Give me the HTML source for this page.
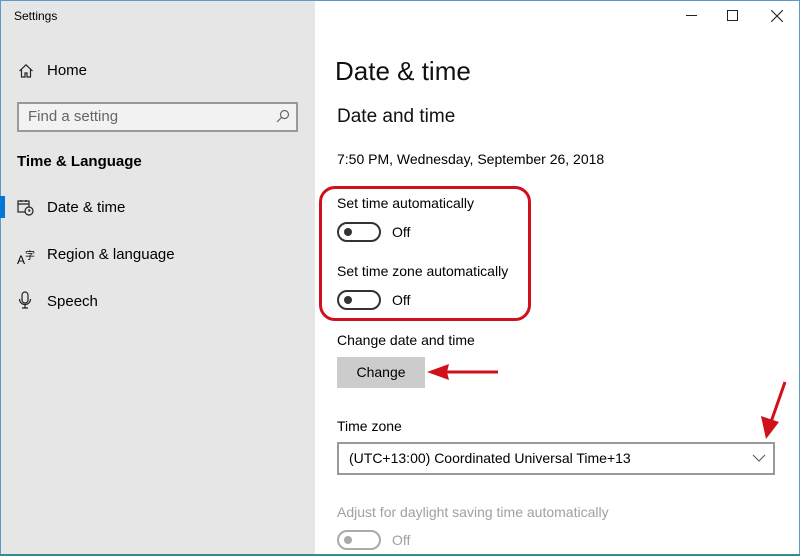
<!DOCTYPE html>
<html><head><style>
*{margin:0;padding:0;box-sizing:border-box}
body{width:800px;height:556px;overflow:hidden;background:#fff;font-family:"Liberation Sans",sans-serif;position:relative;color:#000}
.a{position:absolute;white-space:nowrap}
.side{position:absolute;left:0;top:0;width:315px;height:556px;background:#e6e6e6;border-left:1px solid #5a9bc8}
.tog{position:absolute;width:44px;height:20px;border:2px solid #333;border-radius:10px}
.tog::after{content:"";position:absolute;left:5px;top:4px;width:8px;height:8px;border-radius:50%;background:#333}
</style></head><body>
<div class="side"></div>
<div class="a" style="left:0;top:0;width:800px;height:1px;background:#5a9bc8"></div>
<div class="a" style="right:0;top:0;width:1px;height:556px;background:#5a9bc8"></div>
<div class="a" style="left:0;bottom:0;width:800px;height:2px;background:#3a8a8a"></div>
<div class="a" style="left:14px;top:9px;font-size:12px">Settings</div>
<svg class="a" style="left:18px;top:63px" width="16" height="16" viewBox="0 0 16 16" fill="none" stroke="#222" stroke-width="1.2"><path d="M1.5 8 8 1.8 14.5 8M3.5 6.5V14h3.5V10h2v4h3.5V6.5"/></svg>
<div class="a" style="left:47px;top:62px;font-size:15px">Home</div>
<div class="a" style="left:17px;top:102px;width:281px;height:30px;border:2px solid #999;background:#f2f2f2"></div>
<div class="a" style="left:28px;top:108px;font-size:15px;color:#666">Find a setting</div>
<svg class="a" style="left:276px;top:109px" width="14" height="14" viewBox="0 0 14 14" fill="none" stroke="#666" stroke-width="1.2"><circle cx="8.5" cy="5.5" r="4"/><path d="M5.5 8.5 1 13"/></svg>
<div class="a" style="left:17px;top:153px;font-size:15px;font-weight:bold">Time &amp; Language</div>
<div class="a" style="left:0;top:196px;width:5px;height:22px;background:#0078d7"></div>
<svg class="a" style="left:17px;top:199px" width="17" height="17" viewBox="0 0 17 17" fill="none" stroke="#222" stroke-width="1.2"><rect x="1" y="2" width="11" height="11"/><path d="M1 5h11M4 1v2M9 1v2"/><circle cx="12" cy="12" r="4" fill="#e6e6e6"/><path d="M12 10v2h1.5"/></svg>
<div class="a" style="left:47px;top:199px;font-size:15px">Date &amp; time</div>
<div class="a" style="left:17px;top:247px;font-size:12px">A<sup style="font-size:10px">字</sup></div>
<div class="a" style="left:47px;top:246px;font-size:15px">Region &amp; language</div>
<svg class="a" style="left:18px;top:291px" width="14" height="18" viewBox="0 0 14 18" fill="none" stroke="#222" stroke-width="1.2"><rect x="4" y="1" width="6" height="11" rx="3"/><path d="M1.5 8a5.5 5.5 0 0 0 11 0M7 13.5V17M4 17h6"/></svg>
<div class="a" style="left:47px;top:293px;font-size:15px">Speech</div>
<div class="a" style="left:686px;top:15px;width:11px;height:1px;background:#222"></div>
<div class="a" style="left:727px;top:10px;width:11px;height:11px;border:1px solid #222"></div>
<svg class="a" style="left:771px;top:10px" width="12" height="12" viewBox="0 0 12 12" stroke="#222" stroke-width="1.1"><path d="M0 0 12 12M12 0 0 12"/></svg>
<div class="a" style="left:335px;top:56px;font-size:26px;color:#111">Date &amp; time</div>
<div class="a" style="left:337px;top:106px;font-size:19px;color:#111">Date and time</div>
<div class="a" style="left:337px;top:151px;font-size:14px">7:50 PM, Wednesday, September 26, 2018</div>
<div class="a" style="left:319px;top:186px;width:212px;height:135px;border:3px solid #d0101a;border-radius:16px"></div>
<div class="a" style="left:337px;top:195px;font-size:14px">Set time automatically</div>
<div class="tog" style="left:337px;top:222px"></div>
<div class="a" style="left:392px;top:224px;font-size:14px">Off</div>
<div class="a" style="left:337px;top:263px;font-size:14px">Set time zone automatically</div>
<div class="tog" style="left:337px;top:290px"></div>
<div class="a" style="left:392px;top:292px;font-size:14px">Off</div>
<div class="a" style="left:337px;top:332px;font-size:14px">Change date and time</div>
<div class="a" style="left:337px;top:357px;width:88px;height:31px;background:#cccccc;font-size:14px;text-align:center;line-height:31px">Change</div>
<svg class="a" style="left:425px;top:362px" width="75" height="20" viewBox="0 0 75 20"><path d="M20 10H73" stroke="#d0101a" stroke-width="3"/><path d="M2 10 24 2 22 10 24 18Z" fill="#d0101a"/></svg>
<div class="a" style="left:337px;top:418px;font-size:14px">Time zone</div>
<div class="a" style="left:337px;top:442px;width:438px;height:33px;border:2px solid #999;background:#fff"></div>
<div class="a" style="left:349px;top:450px;font-size:14px">(UTC+13:00) Coordinated Universal Time+13</div>
<svg class="a" style="left:752px;top:454px" width="14" height="8" viewBox="0 0 14 8" fill="none" stroke="#555" stroke-width="1"><path d="M1 1 7 7 13 1"/></svg>
<svg class="a" style="left:755px;top:380px" width="35" height="62" viewBox="0 0 35 62"><path d="M30 2 16 42" stroke="#d0101a" stroke-width="3"/><path d="M11 59 6 36 24 42Z" fill="#d0101a"/></svg>
<div class="a" style="left:337px;top:504px;font-size:14px;color:#a0a0a0">Adjust for daylight saving time automatically</div>
<div class="tog" style="left:337px;top:530px;border-color:#aaa"></div>
<div class="a" style="left:392px;top:532px;font-size:14px;color:#a0a0a0">Off</div>
<style>.tog[style*="#aaa"]::after{background:#aaa}</style>
</body></html>
